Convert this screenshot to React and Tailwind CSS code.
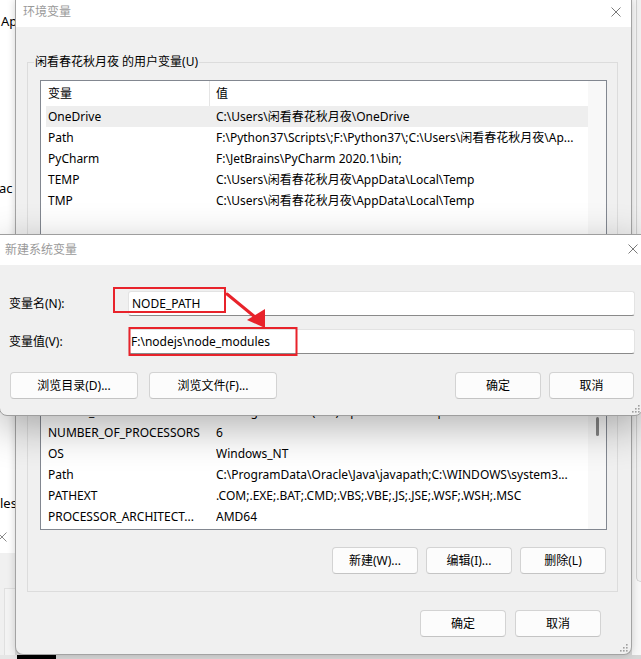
import React from "react";

function CloseX({ color = "#7a7a7a" }) {
  return (
    <svg width="10" height="10" viewBox="0 0 10 10" className="block">
      <path d="M0.5 0.5L9.5 9.5M9.5 0.5L0.5 9.5" stroke={color} strokeWidth="1" fill="none" />
    </svg>
  );
}

function Grip() {
  const dots = [[6, 0], [3, 3], [6, 3], [0, 6], [3, 6], [6, 6]];
  return (
    <svg width="8" height="8" viewBox="0 0 8 8" className="block">
      {dots.map(([x, y], i) => (
        <rect key={i} x={x} y={y} width="1.6" height="1.6" fill="#a0a0a0" />
      ))}
    </svg>
  );
}

function Btn({ children, className = "" }) {
  return (
    <div
      className={`flex h-[27px] shrink-0 items-center justify-center rounded-[4px] border border-[#d3d3d3] border-b-[#c4c4c4] bg-[#fcfcfc] text-[12px] leading-[16px] text-black ${className}`}
    >
      {children}
    </div>
  );
}

function Row({ name, value, selected }) {
  return (
    <div className={`ml-[5px] flex h-[21px] items-center ${selected ? "bg-[#eeeeee]" : ""}`}>
      <div className="w-[170px] shrink-0 overflow-hidden whitespace-nowrap pl-[2px] leading-[21px]">{name}</div>
      <div className="min-w-0 flex-1 overflow-hidden whitespace-nowrap leading-[21px]">{value}</div>
    </div>
  );
}

function ListView({ rows, heightClass, scrollClass = "", thumb = false }) {
  return (
    <div className={`flex border border-[#828790] bg-white text-[12px] text-black ${heightClass}`}>
      <div className="flex min-w-0 flex-1 flex-col">
        <div className="flex h-[25px] shrink-0 items-stretch">
          <div className="flex w-[168px] items-center pl-[7px]">变量</div>
          <div className="w-px bg-[#e5e5e5]" />
          <div className="flex items-center pl-[6px]">值</div>
        </div>
        <div className="min-h-0 flex-1 overflow-hidden">
          <div className={scrollClass}>
            {rows.map((r, i) => (
              <Row key={i} name={r[0]} value={r[1]} selected={r[2]} />
            ))}
          </div>
        </div>
      </div>
      <div className="w-[18px] shrink-0 bg-[#f8f8f8]">
        {thumb && <div className="ml-[8px] mt-[93px] h-[19px] w-[3px] rounded-full bg-[#858585]" />}
      </div>
    </div>
  );
}

const userRows = [
  ["OneDrive", "C:\\Users\\闲看春花秋月夜\\OneDrive", true],
  ["Path", "F:\\Python37\\Scripts\\;F:\\Python37\\;C:\\Users\\闲看春花秋月夜\\Ap..."],
  ["PyCharm", "F:\\JetBrains\\PyCharm 2020.1\\bin;"],
  ["TEMP", "C:\\Users\\闲看春花秋月夜\\AppData\\Local\\Temp"],
  ["TMP", "C:\\Users\\闲看春花秋月夜\\AppData\\Local\\Temp"],
];

const sysRows = [
  ["ComSpec", "C:\\WINDOWS\\system32\\cmd.exe"],
  ["DriverData", "C:\\Windows\\System32\\Drivers\\DriverData"],
  ["JAVA_HOME", "C:\\Program Files\\Java\\jdk1.8.0_201"],
  ["MAVEN_HOME", "C:\\Program Files (x86)\\apache-maven\\apache-m..."],
  ["NUMBER_OF_PROCESSORS", "6"],
  ["OS", "Windows_NT"],
  ["Path", "C:\\ProgramData\\Oracle\\Java\\javapath;C:\\WINDOWS\\system3..."],
  ["PATHEXT", ".COM;.EXE;.BAT;.CMD;.VBS;.VBE;.JS;.JSE;.WSF;.WSH;.MSC"],
  ["PROCESSOR_ARCHITECT...", "AMD64"],
  ["PROCESSOR_IDENTIFIER", "Intel64 Family 6 Model 158 Stepping 10, GenuineIntel"],
];

function GroupBox({ title, children, className = "" }) {
  return (
    <div className={`relative border border-[#dcdcdc] pb-[17px] pl-[12px] pr-[10px] pt-[17px] ${className}`}>
      <div className="absolute left-[6px] top-[-9px] bg-[#f0f0f0] px-[1px] text-[12px] leading-[16px] text-black">
        {title}
      </div>
      {children}
    </div>
  );
}

export default function App() {
  return (
    <div className="relative h-[659px] w-[641px] overflow-hidden bg-[#d6d6d6] font-['Noto_Sans','Noto_Sans_CJK_SC',sans-serif]">
      <div className="flex h-[655px]">
        {/* background window on the left */}
        <div className="flex h-full w-[15px] shrink-0 flex-col overflow-hidden bg-white text-[13px] text-black">
          <div className="mt-[12px] whitespace-nowrap pl-[1px] leading-[18px]">Ap</div>
          <div className="-ml-[1px] mt-[149px] whitespace-nowrap leading-[18px]">ac</div>
          <div className="mt-[297px] whitespace-nowrap leading-[18px]">les</div>
          <div className="-ml-[3px] mt-[20px]">
            <CloseX color="#8a8a8a" />
          </div>
          <div className="mt-[11px] flex flex-1 bg-[#f0f0f0]">
            <div className="ml-[4px] mt-[35px] flex-1 border-l border-t border-[#e0e0e0] bg-[#f3f3f3]" />
          </div>
        </div>

        {/* main window 环境变量 */}
        <div className="relative z-10 flex h-[655px] w-[617px] shrink-0 flex-col overflow-hidden rounded-b-[8px] border border-t-0 border-[#a3a3a3] bg-[#f0f0f0] shadow-[0_0_8px_rgba(0,0,0,0.18)]">
          <div className="flex h-[27px] shrink-0 items-start justify-between bg-white">
            <div className="pl-[7px] pt-[4px] text-[12px] leading-[16px] text-[#9a9a9a]">环境变量</div>
            <div className="mr-[10px] mt-[7px]">
              <CloseX />
            </div>
          </div>
          <div className="flex flex-1 flex-col pl-[11px] pr-[13px]">
            <GroupBox title="闲看春花秋月夜 的用户变量(U)" className="mt-[35px] !pb-[8px]">
              <ListView rows={userRows} heightClass="h-[160px]" />
              <div className="mt-[10px] flex justify-end gap-[8px] pr-[1px]">
                <Btn className="w-[86px]">新建(N)...</Btn>
                <Btn className="w-[86px]">编辑(E)...</Btn>
                <Btn className="w-[86px]">删除(D)</Btn>
              </div>
            </GroupBox>
            <GroupBox title="系统变量(S)" className="mt-[19px]">
              <ListView rows={sysRows} heightClass="h-[207px]" scrollClass="-mt-[11px]" thumb />
              <div className="mt-[17px] flex justify-end gap-[8px] pr-[1px]">
                <Btn className="w-[86px]">新建(W)...</Btn>
                <Btn className="w-[86px]">编辑(I)...</Btn>
                <Btn className="w-[86px]">删除(L)</Btn>
              </div>
            </GroupBox>
            <div className="mr-[17px] mt-[18px] flex justify-end gap-[9px]">
              <Btn className="w-[86px]">确定</Btn>
              <Btn className="w-[86px]">取消</Btn>
            </div>
          </div>
          <div className="absolute bottom-[2px] right-[3px]">
            <Grip />
          </div>
        </div>

        {/* background window on the right */}
        <div className="flex h-full w-[9px] shrink-0 flex-col bg-[#f7f7f7]">
          <div className="ml-[4px] h-[582px] rounded-bl-[6px] border-b border-l border-[#d2d2d2] bg-[#f0f0f0]" />
        </div>
      </div>
      <div className="flex h-[4px]">
        <div className="w-[17px] bg-[#e6e6e6]" />
        <div className="w-[39px] bg-black" />
        <div className="flex-1 bg-[#d6d6d6]" />
      </div>

      {/* dialog 新建系统变量 */}
      <div className="absolute left-[-1px] top-[234px] z-20 flex h-[182px] w-[644px] flex-col overflow-hidden rounded-b-[8px] border border-[#9e9e9e] bg-[#f0f0f0] shadow-[0_12px_40px_rgba(0,0,0,0.3)]">
        <div className="flex h-[30px] shrink-0 items-start justify-between bg-white">
          <div className="pl-[5px] pt-[7px] text-[12px] leading-[16px] text-[#9a9a9a]">新建系统变量</div>
          <div className="mr-[4px] mt-[9px]">
            <CloseX />
          </div>
        </div>
        <div className="flex flex-1 flex-col pl-[9px] pr-[7px] pt-[26px] text-[12px] text-black">
          <div className="flex items-center">
            <div className="w-[119px] shrink-0 leading-[16px]">变量名(N):</div>
            <div className="flex h-[25px] flex-1 items-center rounded-[3px] border border-[#e3e3e3] border-b-[#8a8a8a] bg-white pl-[3px] leading-[16px]">
              NODE_PATH
            </div>
          </div>
          <div className="mt-[13px] flex items-center">
            <div className="w-[119px] shrink-0 leading-[16px]">变量值(V):</div>
            <div className="flex h-[25px] flex-1 items-center rounded-[3px] border border-[#e3e3e3] border-b-[#8a8a8a] bg-white pl-[2px] leading-[16px]">
              F:\nodejs\node_modules
            </div>
          </div>
          <div className="ml-[1px] mr-[1px] mt-[18px] flex items-center">
            <Btn className="w-[128px]">浏览目录(D)...</Btn>
            <Btn className="ml-[11px] w-[128px]">浏览文件(F)...</Btn>
            <div className="flex-1" />
            <Btn className="w-[86px]">确定</Btn>
            <Btn className="ml-[8px] w-[85px]">取消</Btn>
          </div>
        </div>
        <div className="absolute bottom-[2px] right-[2px]">
          <Grip />
        </div>
      </div>

      {/* red annotation */}
      <svg className="pointer-events-none absolute left-0 top-0 z-30" width="641" height="659" viewBox="0 0 641 659">
        <rect x="114" y="288" width="111" height="24" fill="none" stroke="#e8232b" strokeWidth="2" />
        <rect x="129.5" y="328" width="167" height="27" fill="none" stroke="#e8232b" strokeWidth="2" />
        <line x1="227" y1="294" x2="255" y2="317" stroke="#e8232b" strokeWidth="3" strokeLinecap="round" />
        <polygon points="247,320 265,309 265,328" fill="#e8232b" />
      </svg>
    </div>
  );
}
